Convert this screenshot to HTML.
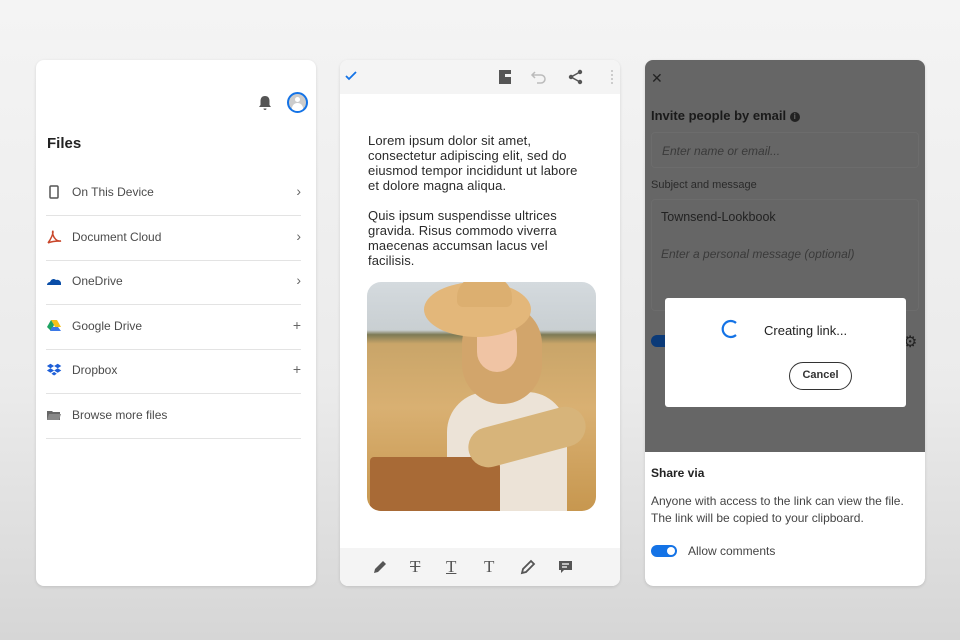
<!DOCTYPE html>
<html><head><meta charset="utf-8"><style>
*{margin:0;padding:0;box-sizing:border-box}
body{width:960px;height:640px;overflow:hidden;background:linear-gradient(180deg,#f4f4f4 0%,#ebebeb 60%,#d6d6d6 100%);font-family:"Liberation Sans",sans-serif;position:relative}
.p{position:absolute;top:60px;width:280px;height:526px;background:#fff;border-radius:8px;overflow:hidden;box-shadow:0 1px 3px rgba(0,0,0,.12)}
.row{position:absolute;left:10px;right:15px;height:45px;border-bottom:1px solid #e3e3e3;font-size:12px;color:#4b4b4b}
.row span.t{position:absolute;left:26px;top:14px}
.row .ic{position:absolute;left:0;top:13px;width:16px;height:16px}
.row .r{position:absolute;right:0;top:12px;font-size:14px;color:#666}
.lorem{position:absolute;left:28px;top:73px;width:240px;font-size:13px;line-height:15px;color:#2a2a2a;white-space:nowrap;letter-spacing:.1px}
.tb svg{position:absolute}
</style></head><body>

<div class="p" style="left:36px">
  <svg style="position:absolute;left:222px;top:35px" width="14" height="16" viewBox="0 0 14 16"><path d="M7 1c-3 0-4.5 2-4.5 5v4L1 12h12l-1.5-2V6C11.5 3 10 1 7 1zM5.5 13.5h3a1.5 1.5 0 0 1-3 0z" fill="#555"/></svg>
  <div style="position:absolute;left:251px;top:32px;width:21px;height:21px;border-radius:50%;border:2px solid #1473e6;background:#ccc;overflow:hidden"><div style="position:absolute;left:6px;top:3px;width:5px;height:5px;border-radius:50%;background:#fff"></div><div style="position:absolute;left:3px;top:9px;width:11px;height:8px;border-radius:6px 6px 0 0;background:#fff"></div></div>
  <div style="position:absolute;left:11px;top:75px;font-size:15px;font-weight:bold;color:#222">Files</div>
  <div class="row" style="top:111px"><svg class="ic" viewBox="0 0 16 16"><rect x="4" y="2" width="8" height="12" rx="1" fill="none" stroke="#555" stroke-width="1.5"/></svg><span class="t">On This Device</span><span class="r">›</span></div>
  <div class="row" style="top:156px"><svg class="ic" viewBox="0 0 16 16"><path d="M2 14c3-4 5-9 5-11s-1 0 0 3 4 7 8 6c-4 0-9 0-13 2" fill="none" stroke="#c9472b" stroke-width="1.5"/></svg><span class="t">Document Cloud</span><span class="r">›</span></div>
  <div class="row" style="top:200px"><svg class="ic" viewBox="0 0 16 16"><path d="M1 12c0-2 2-3 3-3 1-3 4-4 6-2 2-1 5 1 5 3v2z" fill="#0a4ea8"/></svg><span class="t">OneDrive</span><span class="r">›</span></div>
  <div class="row" style="top:245px"><svg class="ic" viewBox="0 0 16 16"><path d="M5 2h6l4 7H9z" fill="#f6c01a"/><path d="M5 2l3 5-3 6-4-4z" fill="#1ea362"/><path d="M4 13h11l-3-4H6z" fill="#3b78e7"/></svg><span class="t">Google Drive</span><span class="r">+</span></div>
  <div class="row" style="top:289px"><svg class="ic" viewBox="0 0 16 16"><path d="M4 2l4 2.5-4 2.5-4-2.5zM12 2l4 2.5-4 2.5-4-2.5zM4 7l4 2.5-4 2.5-4-2.5zM12 7l4 2.5-4 2.5-4-2.5zM8 11l3 2-3 2-3-2z" fill="#1e5fd8" transform="scale(.9) translate(1,0)"/></svg><span class="t">Dropbox</span><span class="r">+</span></div>
  <div class="row" style="top:334px"><svg class="ic" viewBox="0 0 16 16"><path d="M1 4h5l1 1h7v8H1z" fill="#666"/><path d="M3 7h12l-2 6H1z" fill="#888"/></svg><span class="t">Browse more files</span></div>
</div>

<div class="p" style="left:340px">
  <div class="tb" style="position:absolute;left:0;top:0;width:280px;height:34px;background:#f4f4f4">
    <svg style="left:4px;top:10px" width="14" height="12" viewBox="0 0 14 12"><path d="M2 6l3 3 7-7" fill="none" stroke="#1473e6" stroke-width="1.8"/></svg>
    <svg style="left:158px;top:9px" width="14" height="16" viewBox="0 0 14 16"><path d="M1 1h12v4H7v3h6v7H1z" fill="#555"/></svg>
    <svg style="left:190px;top:9px" width="20" height="16" viewBox="0 0 20 16"><path d="M5 3L2 6l3 3M2 6h9a4 4 0 0 1 0 8H7" fill="none" stroke="#bbb" stroke-width="1.5"/></svg>
    <svg style="left:228px;top:9px" width="16" height="16" viewBox="0 0 16 16"><circle cx="12" cy="3" r="2.2" fill="#555"/><circle cx="12" cy="13" r="2.2" fill="#555"/><circle cx="3" cy="8" r="2.2" fill="#555"/><path d="M12 3L3 8l9 5" fill="none" stroke="#555" stroke-width="1.5"/></svg>
    <div style="position:absolute;left:271px;top:10px;width:2px;height:14px;border-left:2px dotted #ccc"></div>
  </div>
  <div class="lorem">Lorem ipsum dolor sit amet,<br>consectetur adipiscing elit, sed do<br>eiusmod tempor incididunt ut labore<br>et dolore magna aliqua.<br><br>Quis ipsum suspendisse ultrices<br>gravida. Risus commodo viverra<br>maecenas accumsan lacus vel<br>facilisis.</div>
  <div style="position:absolute;left:27px;top:222px;width:229px;height:229px;border-radius:14px;overflow:hidden;background:linear-gradient(180deg,#d4dade 0%,#c9cfd2 21%,#7d7a55 23%,#c9a569 27%,#d9b072 55%,#c7974f 100%)">
    <div style="position:absolute;left:80px;top:110px;width:120px;height:130px;background:#ece3d7;border-radius:40px 40px 0 0"></div>
    <div style="position:absolute;left:95px;top:22px;width:80px;height:100px;background:#d2a56b;border-radius:40px"></div>
    <div style="position:absolute;left:110px;top:35px;width:40px;height:55px;background:#f0c4a4;border-radius:20px"></div>
    <div style="position:absolute;left:57px;top:0px;width:107px;height:55px;background:#e3b77a;border-radius:50%"></div>
    <div style="position:absolute;left:90px;top:-5px;width:55px;height:30px;background:#dcaf70;border-radius:20px 20px 6px 6px"></div>
    <div style="position:absolute;left:3px;top:175px;width:130px;height:54px;background:#a86a36;border-radius:4px 10px 0 0"></div>
    <div style="position:absolute;left:100px;top:135px;width:120px;height:40px;background:#d7b47a;transform:rotate(-15deg);border-radius:20px"></div>
  </div>
  <div class="tb" style="position:absolute;left:0;top:488px;width:280px;height:38px;background:#f4f4f4;font-family:'Liberation Serif',serif;font-size:17px;color:#555">
    <svg style="left:32px;top:11px" width="16" height="16" viewBox="0 0 16 16"><path d="M2 14l1-4 8-8 3 3-8 8z" fill="#555"/></svg>
    <div style="position:absolute;left:70px;top:9px;text-decoration:line-through">T</div>
    <div style="position:absolute;left:106px;top:9px;text-decoration:underline">T</div>
    <div style="position:absolute;left:144px;top:9px">T</div>
    <svg style="left:180px;top:11px" width="16" height="16" viewBox="0 0 16 16"><path d="M2 14l1-4 8-8 3 3-8 8z" fill="none" stroke="#555" stroke-width="1.8"/></svg>
    <svg style="left:218px;top:12px" width="15" height="15" viewBox="0 0 15 15"><path d="M1 1h13v9H6l-3 3v-3H1z" fill="#555"/><path d="M4 4h7M4 7h5" stroke="#fff" stroke-width="1.2"/></svg>
  </div>
</div>

<div class="p" style="left:645px;background:#666">
  <div style="position:absolute;left:6px;top:10px;font-size:14px;color:#222">✕</div>
  <div style="position:absolute;left:6px;top:48px;font-size:13px;font-weight:bold;color:#1a1a1a">Invite people by email <span style="display:inline-block;width:10px;height:10px;border-radius:50%;background:#222;color:#666;font-size:8px;text-align:center;line-height:10px;vertical-align:1px">i</span></div>
  <div style="position:absolute;left:6px;top:72px;width:268px;height:36px;border:1px solid #6c6c6c;border-radius:4px;font-size:12px;font-style:italic;color:#3a3a3a;padding:11px 10px">Enter name or email...</div>
  <div style="position:absolute;left:6px;top:119px;font-size:11px;color:#2a2a2a">Subject and message</div>
  <div style="position:absolute;left:6px;top:139px;width:268px;height:112px;border:1px solid #6c6c6c;border-radius:4px"></div>
  <div style="position:absolute;left:16px;top:150px;font-size:12.5px;color:#222">Townsend-Lookbook</div>
  <div style="position:absolute;left:16px;top:187px;font-size:12px;font-style:italic;color:#3a3a3a">Enter a personal message (optional)</div>
  <div style="position:absolute;left:6px;top:275px;width:20px;height:12px;border-radius:6px;background:#0b3a78"></div>
  <div style="position:absolute;left:258px;top:272px;font-size:16px;color:#222">⚙</div>
  <div style="position:absolute;left:20px;top:238px;width:241px;height:109px;background:#fff;border-radius:3px">
    <svg style="position:absolute;left:54px;top:20px" width="22" height="22" viewBox="0 0 22 22"><path d="M17 5A8 8 0 1 0 17 17" fill="none" stroke="#1473e6" stroke-width="2.2"/></svg>
    <div style="position:absolute;left:99px;top:25px;font-size:13px;color:#222">Creating link...</div>
    <div style="position:absolute;left:124px;top:64px;width:63px;height:28px;border:1.5px solid #333;border-radius:14px;font-size:11px;font-weight:bold;color:#333;text-align:center;line-height:25px">Cancel</div>
  </div>
  <div style="position:absolute;left:0;top:392px;width:280px;height:134px;background:#fff">
    <div style="position:absolute;left:6px;top:14px;font-size:12px;font-weight:bold;color:#222">Share via</div>
    <div style="position:absolute;left:6px;top:41px;font-size:12px;line-height:17px;color:#444">Anyone with access to the link can view the file.<br>The link will be copied to your clipboard.</div>
    <div style="position:absolute;left:6px;top:93px;width:26px;height:12px;border-radius:6px;background:#1473e6"><div style="position:absolute;right:2px;top:2px;width:8px;height:8px;border-radius:50%;background:#fff"></div></div>
    <div style="position:absolute;left:43px;top:92px;font-size:12px;color:#444">Allow comments</div>
  </div>
</div>
</body></html>
